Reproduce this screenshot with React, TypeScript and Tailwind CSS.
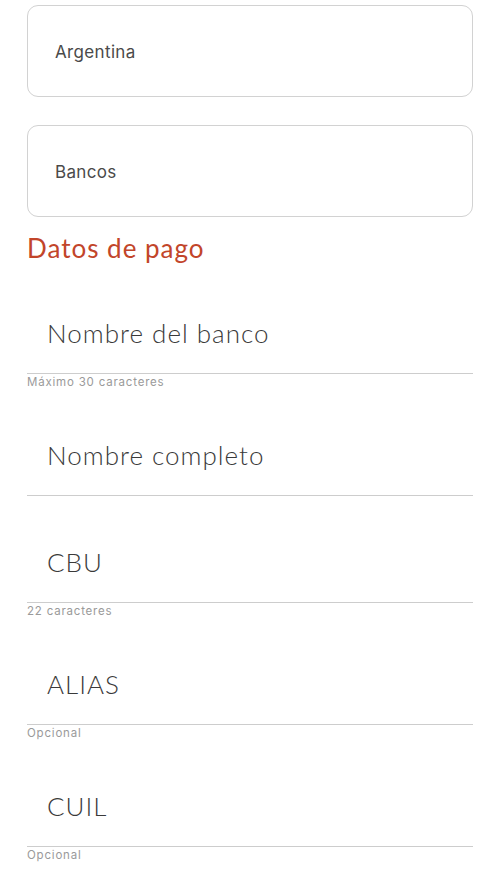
const fields = [
  { label: 'Nombre del banco', hint: 'Máximo 30 caracteres' },
  { label: 'Nombre completo', hint: '' },
  { label: 'CBU', hint: '22 caracteres' },
  { label: 'ALIAS', hint: 'Opcional' },
  { label: 'CUIL', hint: 'Opcional' },
]

const SelectBox = ({ value }: { value: string }) => (
  <div className="flex h-[92px] items-center rounded-[11px] border border-[#d2d2d2] bg-white pt-[3px] pl-[27px]">
    <span className="font-['Inter',sans-serif] text-[17px] tracking-[0.35px] text-[#4a4a4a]">{value}</span>
  </div>
)

const Field = ({ label, hint }: { label: string; hint: string }) => (
  <div>
    <div className="border-b border-[#cdcdcd] pt-[54px] pb-[28px] pl-[20px]">
      <span className="block font-['Lato',sans-serif] text-[26px] leading-[24px] font-light tracking-[1px] text-[#3a3a3a]">
        {label}
      </span>
    </div>
    {hint && (
      <p className="pt-[2px] font-['Inter',sans-serif] text-[11.5px] leading-[13px] tracking-[0.8px] text-[#9a9a9a]">{hint}</p>
    )}
  </div>
)

export default function App() {
  return (
    <div className="min-h-screen bg-white px-[27px] pt-[5px]">
      <div className="flex flex-col gap-[28px]">
        <SelectBox value="Argentina" />
        <SelectBox value="Bancos" />
      </div>
      <h2 className="mt-[17px] mb-[5px] font-['Lato',sans-serif] text-[26px] leading-[28px] font-normal tracking-[1px] text-[#c2452a]">
        Datos de pago
      </h2>
      {fields.map((f) => (
        <Field key={f.label} label={f.label} hint={f.hint} />
      ))}
    </div>
  )
}
